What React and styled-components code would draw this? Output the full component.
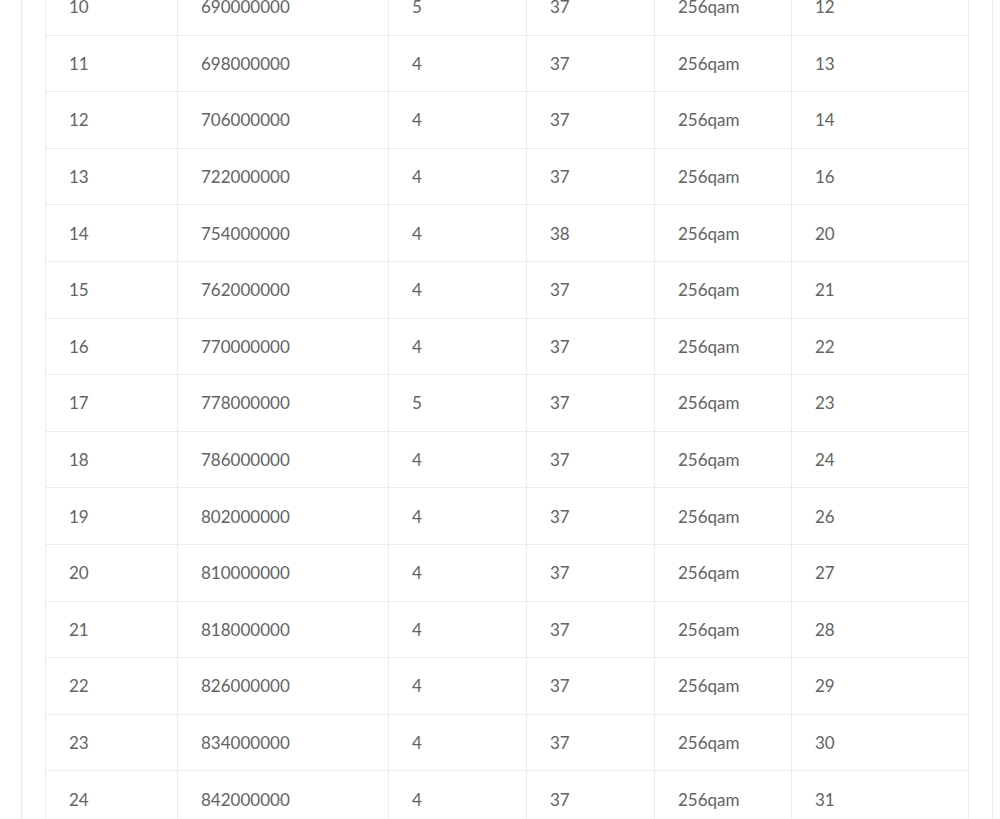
import React from 'react';
import styled, { createGlobalStyle } from 'styled-components';

const GlobalStyle = createGlobalStyle`
  html, body {
    margin: 0;
    padding: 0;
    background: #ffffff;
    overflow: hidden;
  }
  body {
    font-family: Lato, "Open Sans", sans-serif;
  }
`;

const Page = styled.div`
  width: 1000px;
  height: 819px;
  overflow: hidden;
`;

const Panel = styled.div`
  margin: -22px 0 0 21px;
  width: 972px;
  padding: 0 24px 0 23px;
  box-sizing: border-box;
  border-left: 1px solid #e9e9e9;
  border-right: 1px solid #e9e9e9;
  background: #ffffff;
`;

const Table = styled.table`
  width: 923px;
  border-collapse: collapse;
  table-layout: fixed;
`;

const Col = styled.col`
  width: ${props => props.w}px;
`;

const Cell = styled.td`
  padding: 17.3px 23px;
  line-height: 21px;
  font-size: 17px;
  color: #636363;
  border: 1px solid #ececec;
  text-align: left;
  vertical-align: middle;
  white-space: nowrap;
`;

const widths = [132, 211, 138, 128, 137, 177];

const rows = [
  ['10', '690000000', '5', '37', '256qam', '12'],
  ['11', '698000000', '4', '37', '256qam', '13'],
  ['12', '706000000', '4', '37', '256qam', '14'],
  ['13', '722000000', '4', '37', '256qam', '16'],
  ['14', '754000000', '4', '38', '256qam', '20'],
  ['15', '762000000', '4', '37', '256qam', '21'],
  ['16', '770000000', '4', '37', '256qam', '22'],
  ['17', '778000000', '5', '37', '256qam', '23'],
  ['18', '786000000', '4', '37', '256qam', '24'],
  ['19', '802000000', '4', '37', '256qam', '26'],
  ['20', '810000000', '4', '37', '256qam', '27'],
  ['21', '818000000', '4', '37', '256qam', '28'],
  ['22', '826000000', '4', '37', '256qam', '29'],
  ['23', '834000000', '4', '37', '256qam', '30'],
  ['24', '842000000', '4', '37', '256qam', '31'],
];

export default function App() {
  return (
    <Page>
      <GlobalStyle />
      <Panel>
        <Table>
          <colgroup>
            {widths.map((w, i) => (
              <Col key={i} w={w} />
            ))}
          </colgroup>
          <tbody>
            {rows.map(row => (
              <tr key={row[0]}>
                {row.map((value, i) => (
                  <Cell key={i}>{value}</Cell>
                ))}
              </tr>
            ))}
          </tbody>
        </Table>
      </Panel>
    </Page>
  );
}
